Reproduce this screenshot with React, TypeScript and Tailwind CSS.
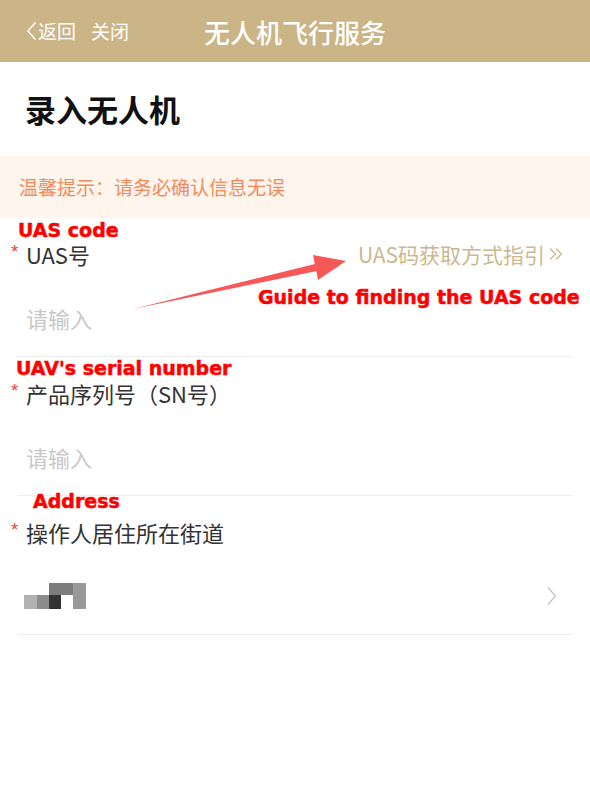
import React from 'react';

const cjk = { fontFamily: '"Noto Sans CJK SC", "Noto Sans", sans-serif' };
const note = { fontFamily: '"DejaVu Sans", "Liberation Sans", sans-serif' };

const Field: React.FC<{ label: string; children: React.ReactNode; extra?: React.ReactNode }> = ({ label, children, extra }) => (
    <div className="mx-[18px] pt-[18px] pb-[6px] border-b border-[#eeeeee]">
        <div className="flex items-center h-[36px]">
            <span
                style={{ fontFamily: '"Liberation Sans", sans-serif' }}
                className="-ml-[7px] w-[15px] self-start mt-[6px] text-[19px] leading-none text-[#e8453c]"
            >
                *
            </span>
            <span className="text-[22px] text-[#333333] leading-none">{label}</span>
            <div className="ml-auto">{extra}</div>
        </div>
        <div className="mt-[14px] h-[64px] flex items-center pl-[8px]">{children}</div>
    </div>
);

const Annotation: React.FC<{ text: string; className: string }> = ({ text, className }) => (
    <span
        style={note}
        className={`absolute font-bold text-[19px] leading-[19px] text-[#ff0000] whitespace-nowrap [-webkit-text-stroke:0.5px_#ff0000] ${className}`}
    >
        {text}
    </span>
);

export default function App() {
    return (
        <div style={cjk} className="relative w-[590px] h-[787px] bg-white overflow-hidden">
            {/* header */}
            <div className="h-[62px] bg-[#cbb486] flex items-center relative text-white">
                <div className="flex items-center pl-[26px] text-[19px]">
                    <svg width="11" height="20" viewBox="0 0 11 20" className="mr-[1px]">
                        <path d="M9.5 1.5 L2 10 L9.5 18.5" fill="none" stroke="white" strokeWidth="1.6" />
                    </svg>
                    <span>返回</span>
                    <span className="ml-[15px]">关闭</span>
                </div>
                <div className="absolute left-0 right-0 text-center text-[26px] font-medium pointer-events-none">无人机飞行服务</div>
            </div>

            <div className="h-[94px] flex items-center pl-[25px]">
                <h1 className="text-[31px] font-bold text-[#111111]">录入无人机</h1>
            </div>

            <div className="h-[62px] bg-[#fff5ec] flex items-center pl-[19px]">
                <span className="text-[19px] text-[#f28a5c]">温馨提示：请务必确认信息无误</span>
            </div>

            <Field
                label="UAS号"
                extra={
                    <span className="flex items-center text-[21px] text-[#cbb88f] pr-[8px] leading-none">
                        UAS码获取方式指引
                        <svg width="16" height="14" viewBox="0 0 16 14" className="ml-[3px]">
                            <path d="M2 1.5 L7.5 7 L2 12.5 M8 1.5 L13.5 7 L8 12.5" fill="none" stroke="#cbb88f" strokeWidth="1.3" />
                        </svg>
                    </span>
                }
            >
                <span className="text-[22px] text-[#c8c8c8]">请输入</span>
            </Field>

            <Field label="产品序列号（SN号）">
                <span className="text-[22px] text-[#c8c8c8]">请输入</span>
            </Field>

            <Field label="操作人居住所在街道">
                <div className="flex flex-col -ml-[2px]">
                    <div className="flex h-[12px]">
                        <div className="w-[25px]" />
                        <div className="w-[24px] bg-[#7d7d7d]" />
                        <div className="w-[13px] bg-[#999999]" />
                    </div>
                    <div className="flex h-[14px]">
                        <div className="w-[13px] bg-[#b2b2b2]" />
                        <div className="w-[12px] bg-[#8c8c8c]" />
                        <div className="w-[12px] bg-[#333333]" />
                        <div className="w-[12px]" />
                        <div className="w-[13px] bg-[#999999]" />
                    </div>
                </div>
                <svg width="10" height="20" viewBox="0 0 10 20" className="ml-auto mr-[15px]">
                    <path d="M1 1.5 L8.5 10 L1 18.5" fill="none" stroke="#c4c4c4" strokeWidth="1.3" />
                </svg>
            </Field>

            {/* red annotations */}
            <Annotation text="UAS code" className="left-[18px] top-[221px]" />
            <Annotation text="Guide to finding the UAS code" className="left-[258px] top-[288px]" />
            <Annotation text="UAV's serial number" className="left-[16px] top-[359px]" />
            <Annotation text="Address" className="left-[33px] top-[492px]" />
            <svg className="absolute left-0 top-0 pointer-events-none" width="590" height="787">
                <polygon points="133,309 315,264 317,271" fill="#f65858" />
                <polygon points="313,255 346,261 318,280" fill="#f65858" />
            </svg>
        </div>
    );
}
